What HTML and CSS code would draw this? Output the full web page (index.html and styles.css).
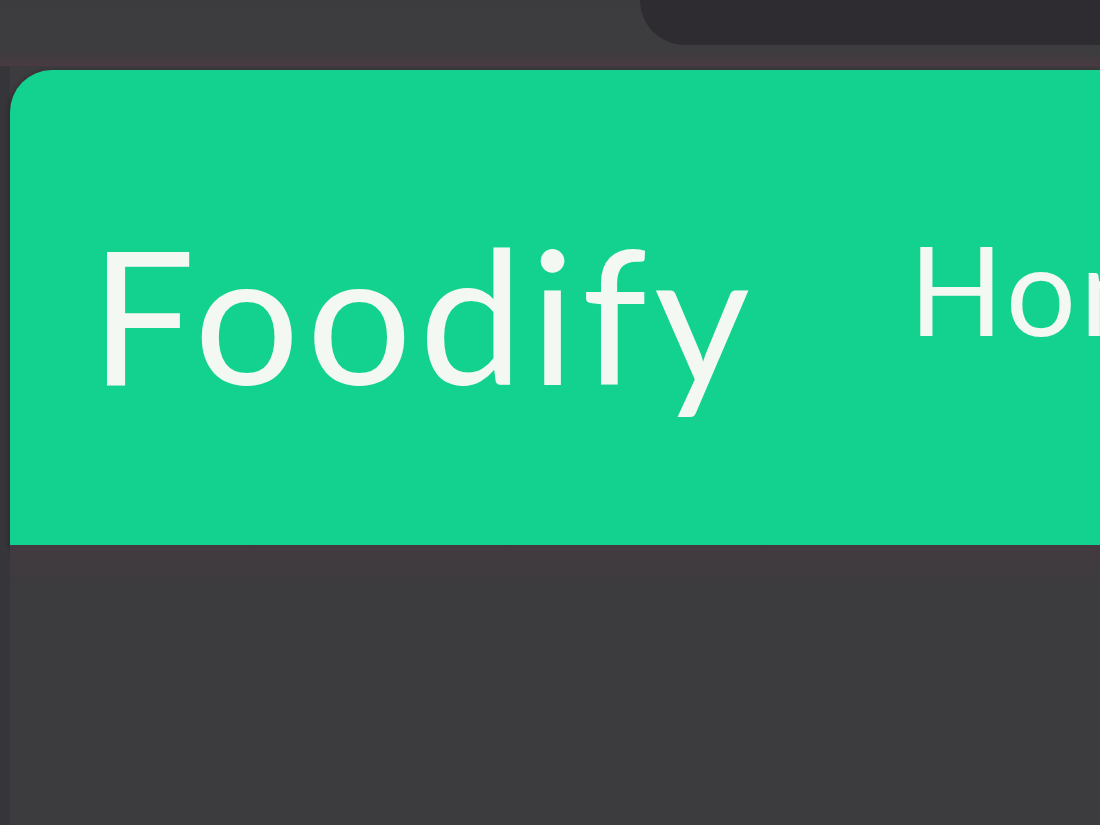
FILE: index.html
```html
<!DOCTYPE html>
<html>
<head>
<meta charset="utf-8">
<link rel="stylesheet" href="styles.css">
</head>
<body>
<div class="page">
  <div class="topbar">
    <div class="top-pill"></div>
  </div>
  <div class="main">
    <header class="header">
      <div class="brand">Foodify</div>
      <nav class="nav">
        <a class="nav-link">Home</a>
      </nav>
    </header>
    <div class="content"></div>
  </div>
</div>
</body>
</html>
```
FILE: styles.css
```css
html, body {
  margin: 0;
  padding: 0;
  height: 100%;
  overflow: hidden;
}
body {
  background: #3c3b3e;
  font-family: "Lato", "Open Sans", sans-serif;
}
.page {
  width: 1100px;
  height: 825px;
  display: flex;
  flex-direction: column;
}
.topbar {
  height: 66px;
  display: flex;
  justify-content: flex-end;
  background: linear-gradient(to bottom, #3c3b3e 0, #3d3c3f 80%, #4a3a42 100%);
}
.top-pill {
  width: 460px;
  height: 45px;
  background: #2e2c30;
  border-bottom-left-radius: 50px;
}
.main {
  flex: 1;
  display: flex;
  flex-direction: column;
  padding-top: 4px;
  background: linear-gradient(to right, #363539 0, #363539 10px, #3c3b3e 10px);
}
.header {
  margin-left: 10px;
  height: 475px;
  background: #13d28f;
  border-top-left-radius: 42px;
  display: flex;
  align-items: center;
  padding-left: 80px;
  gap: 152px;
  box-shadow: 0 3px 4px rgba(10, 40, 30, 0.6), -2px 0 3px rgba(70, 40, 50, 0.5);
  white-space: nowrap;
  overflow: hidden;
}
.brand {
  color: #f3f8f2;
  font-weight: 400;
  font-size: 186px;
  letter-spacing: 7px;
  line-height: 1;
  margin-top: 11px;
  flex: none;
}
.nav {
  display: flex;
  gap: 60px;
  margin-top: -40px;
  flex: none;
}
.nav-link {
  color: #f3f8f2;
  font-weight: 400;
  font-size: 124px;
  letter-spacing: 4px;
  line-height: 1;
}
.content {
  flex: 1;
  margin-left: 10px;
  background: linear-gradient(to bottom, #433a40 0, #3c3b3e 40px);
}
```
